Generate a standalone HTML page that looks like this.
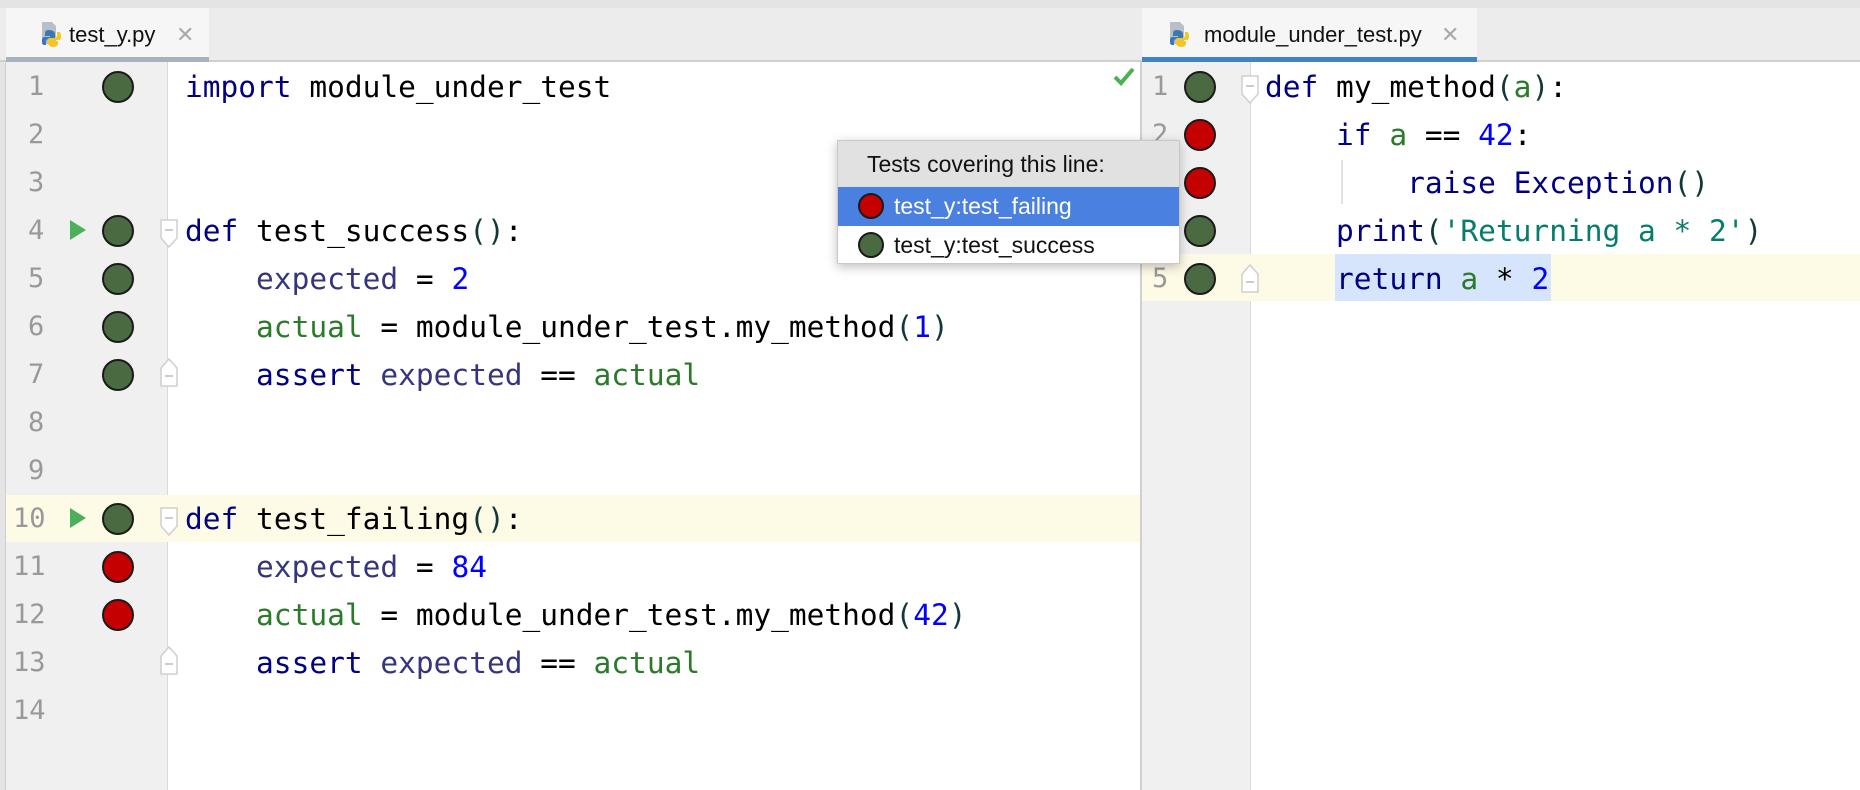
<!DOCTYPE html>
<html><head><meta charset="utf-8"><style>
*{margin:0;padding:0;box-sizing:border-box}
body{width:1860px;height:790px;position:relative;background:#fff;overflow:hidden;font-family:"Liberation Sans",sans-serif}
.abs{position:absolute}
.code{position:absolute;font-family:"DejaVu Sans Mono",monospace;font-size:29.5px;line-height:48px;white-space:pre;color:#000}
.ln{position:absolute;font-family:"DejaVu Sans Mono",monospace;font-size:27px;line-height:48px;color:#999}
.dot{position:absolute;width:32px;height:32px;border-radius:50%;border:2px solid #1a1a1a}
.g{background:#4a6b42}.r{background:#c40000}
.k{color:#000080}.v{color:#35357f}.a{color:#2a7a2a}.n{color:#0000ff}.s{color:#067d6a}.p{color:#123838}
.tri{position:absolute;width:0;height:0;border-top:10px solid transparent;border-bottom:10px solid transparent;border-left:16px solid #4caf5a}
.fold{position:absolute}
</style></head><body>
<div class="abs" style="left:0;top:0;width:1860px;height:8px;background:#e4e4e4"></div>
<div class="abs" style="left:0;top:8px;width:1860px;height:54px;background:#ececec;border-bottom:2px solid #cfcfcf"></div>
<div class="abs" style="left:6px;top:8px;width:203px;height:54px;background:#f6f6f6;border-bottom:5px solid #a8b2bd"></div>
<div class="abs" style="left:1142px;top:8px;width:335px;height:54px;background:#f6f6f6;border-bottom:5px solid #4083c9"></div>
<svg class="abs" style="left:40px;top:20px" width="24" height="30"><path d="M2 2h10l4 4v18H2z" fill="#b9bfc6"/><path d="M9 10c-4 0-4 2-4 4v2h5v1H4c-2 0-2 3-2 4s0 4 2 4h2v-3c0-2 1-3 3-3h4c2 0 2-1 2-2v-3c0-2-2-4-6-4z" fill="#3b78b7"/><path d="M13 27c4 0 5-2 5-4v-2h-5v-1h6c2 0 2-3 2-4s0-4-2-4h-2v3c0 2-1 3-3 3h-4c-2 0-2 1-2 2v3c0 2 2 4 5 4z" fill="#f7c623"/></svg>
<div class="abs" style="left:69px;top:18px;font-size:22px;color:#111;line-height:34px">test_y.py</div>
<div class="abs" style="left:176px;top:18px;font-size:22px;color:#aaa;line-height:34px">✕</div>
<svg class="abs" style="left:1168px;top:20px" width="24" height="30"><path d="M2 2h10l4 4v18H2z" fill="#b9bfc6"/><path d="M9 10c-4 0-4 2-4 4v2h5v1H4c-2 0-2 3-2 4s0 4 2 4h2v-3c0-2 1-3 3-3h4c2 0 2-1 2-2v-3c0-2-2-4-6-4z" fill="#3b78b7"/><path d="M13 27c4 0 5-2 5-4v-2h-5v-1h6c2 0 2-3 2-4s0-4-2-4h-2v3c0 2-1 3-3 3h-4c-2 0-2 1-2 2v3c0 2 2 4 5 4z" fill="#f7c623"/></svg>
<div class="abs" style="left:1204px;top:18px;font-size:22px;color:#111;line-height:34px">module_under_test.py</div>
<div class="abs" style="left:1441px;top:18px;font-size:22px;color:#aaa;line-height:34px">✕</div>

<div class="abs" style="left:0;top:62px;width:6px;height:728px;background:#e4e4e4;border-right:1px solid #cfcfcf"></div>
<div class="abs" style="left:6px;top:62px;width:162px;height:728px;background:#f0f0f0;border-right:1.5px solid #d9d9d9"></div>
<div class="abs" style="left:6px;top:495px;width:1135px;height:47px;background:#fdfae6"></div>
<div class="abs" style="left:1140px;top:62px;width:2px;height:728px;background:#d0d0d0"></div>
<div class="abs" style="left:1142px;top:62px;width:109px;height:728px;background:#f0f0f0;border-right:1.5px solid #d9d9d9"></div>
<div class="abs" style="left:1142px;top:254px;width:718px;height:47px;background:#fdfae6"></div>
<div class="abs" style="left:1335px;top:254px;width:216px;height:47px;background:#d6e4fc"></div>
<div class="abs" style="left:1341px;top:160px;width:2px;height:44px;background:#e2e2e2"></div>

<div class="ln" style="left:28px;top:63px">1</div>
<div class="ln" style="left:28px;top:111px">2</div>
<div class="ln" style="left:28px;top:159px">3</div>
<div class="ln" style="left:28px;top:207px">4</div>
<div class="ln" style="left:28px;top:255px">5</div>
<div class="ln" style="left:28px;top:303px">6</div>
<div class="ln" style="left:28px;top:351px">7</div>
<div class="ln" style="left:28px;top:399px">8</div>
<div class="ln" style="left:28px;top:447px">9</div>
<div class="ln" style="left:13px;top:495px">10</div>
<div class="ln" style="left:13px;top:543px">11</div>
<div class="ln" style="left:13px;top:591px">12</div>
<div class="ln" style="left:13px;top:639px">13</div>
<div class="ln" style="left:13px;top:687px">14</div>
<div class="dot g" style="left:102px;top:71px"></div>
<div class="dot g" style="left:102px;top:215px"></div>
<div class="dot g" style="left:102px;top:263px"></div>
<div class="dot g" style="left:102px;top:311px"></div>
<div class="dot g" style="left:102px;top:359px"></div>
<div class="dot g" style="left:102px;top:503px"></div>
<div class="dot r" style="left:102px;top:551px"></div>
<div class="dot r" style="left:102px;top:599px"></div>
<div class="tri" style="left:70px;top:220px"></div>
<div class="tri" style="left:70px;top:508px"></div>
<!-- fold markers: open (top) -->
<svg class="fold" style="left:159px;top:218px" width="20" height="32"><path d="M2 2h16v18l-8 9-8-9z" fill="#fff" stroke="#cfcfcf" stroke-width="1.5"/><path d="M6 12h8" stroke="#bbb" stroke-width="1.5"/></svg>
<svg class="fold" style="left:159px;top:506px" width="20" height="32"><path d="M2 2h16v18l-8 9-8-9z" fill="#fff" stroke="#cfcfcf" stroke-width="1.5"/><path d="M6 12h8" stroke="#bbb" stroke-width="1.5"/></svg>
<svg class="fold" style="left:159px;top:356px" width="20" height="32"><path d="M2 30h16V12l-8-9-8 9z" fill="#fff" stroke="#cfcfcf" stroke-width="1.5"/><path d="M6 20h8" stroke="#bbb" stroke-width="1.5"/></svg>
<svg class="fold" style="left:159px;top:644px" width="20" height="32"><path d="M2 30h16V12l-8-9-8 9z" fill="#fff" stroke="#cfcfcf" stroke-width="1.5"/><path d="M6 20h8" stroke="#bbb" stroke-width="1.5"/></svg>

<div class="code" style="left:185px;top:63px"><span class="k">import</span> module_under_test</div>
<div class="code" style="left:185px;top:207px"><span class="k">def</span> test_success<span class="p">()</span>:</div>
<div class="code" style="left:185px;top:255px">    <span class="v">expected</span> = <span class="n">2</span></div>
<div class="code" style="left:185px;top:303px">    <span class="a">actual</span> = module_under_test.my_method<span class="p">(</span><span class="n">1</span><span class="p">)</span></div>
<div class="code" style="left:185px;top:351px">    <span class="k">assert</span> <span class="v">expected</span> == <span class="a">actual</span></div>
<div class="code" style="left:185px;top:495px"><span class="k">def</span> test_failing<span class="p">()</span>:</div>
<div class="code" style="left:185px;top:543px">    <span class="v">expected</span> = <span class="n">84</span></div>
<div class="code" style="left:185px;top:591px">    <span class="a">actual</span> = module_under_test.my_method<span class="p">(</span><span class="n">42</span><span class="p">)</span></div>
<div class="code" style="left:185px;top:639px">    <span class="k">assert</span> <span class="v">expected</span> == <span class="a">actual</span></div>

<svg class="abs" style="left:1113px;top:66px" width="22" height="22"><path d="M2 11l6 6L20 3" stroke="#4caf50" stroke-width="4" fill="none"/></svg>

<div class="ln" style="left:1152px;top:63px">1</div>
<div class="ln" style="left:1152px;top:111px">2</div>
<div class="ln" style="left:1152px;top:255px">5</div>
<div class="dot g" style="left:1184px;top:71px"></div>
<div class="dot r" style="left:1184px;top:119px"></div>
<div class="dot r" style="left:1184px;top:167px"></div>
<div class="dot g" style="left:1184px;top:215px"></div>
<div class="dot g" style="left:1184px;top:263px"></div>
<svg class="fold" style="left:1240px;top:74px" width="20" height="32"><path d="M2 2h16v18l-8 9-8-9z" fill="#fff" stroke="#cfcfcf" stroke-width="1.5"/><path d="M6 12h8" stroke="#bbb" stroke-width="1.5"/></svg>
<svg class="fold" style="left:1240px;top:262px" width="20" height="32"><path d="M2 30h16V12l-8-9-8 9z" fill="#fff" stroke="#cfcfcf" stroke-width="1.5"/><path d="M6 20h8" stroke="#bbb" stroke-width="1.5"/></svg>

<div class="code" style="left:1265px;top:63px"><span class="k">def</span> my_method<span class="p">(</span><span class="a">a</span><span class="p">)</span>:</div>
<div class="code" style="left:1265px;top:111px">    <span class="k">if</span> <span class="a">a</span> == <span class="n">42</span>:</div>
<div class="code" style="left:1265px;top:159px">        <span class="k">raise</span> <span class="k">Exception</span><span class="p">()</span></div>
<div class="code" style="left:1265px;top:207px">    <span class="k">print</span><span class="p">(</span><span class="s">'Returning a * 2'</span><span class="p">)</span></div>
<div class="code" style="left:1265px;top:255px">    <span class="k">return</span> <span class="a">a</span> * <span class="n">2</span></div>

<div class="abs" style="left:837px;top:140px;width:343px;height:124px;background:#fff;border:1px solid #c8c8c8;box-shadow:0 3px 10px rgba(0,0,0,.25)">
 <div style="height:46px;background:#e1e1e1;font-size:23px;line-height:46px;padding-left:29px;color:#111">Tests covering this line:</div>
 <div style="position:relative;height:39px;background:#4a80e0;color:#fff;font-size:23px;line-height:39px;padding-left:56px">test_y:test_failing<div class="dot r" style="left:20px;top:6px;width:26px;height:26px"></div></div>
 <div style="position:relative;height:38px;color:#111;font-size:23px;line-height:38px;padding-left:56px">test_y:test_success<div class="dot g" style="left:20px;top:6px;width:26px;height:26px"></div></div>
</div>
</body></html>
